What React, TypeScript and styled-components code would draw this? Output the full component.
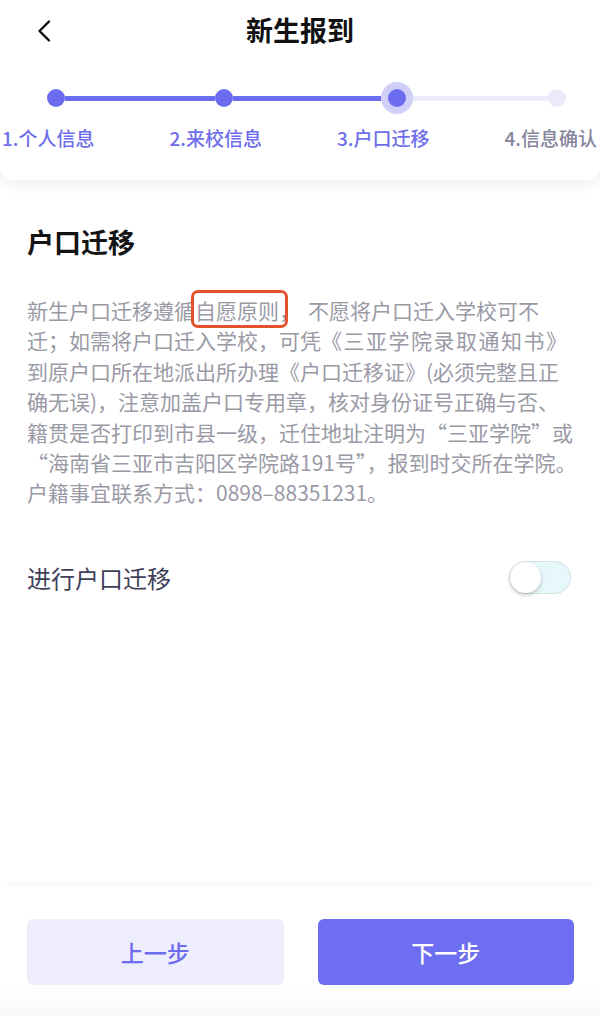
import React from "react";
import styled, { createGlobalStyle } from "styled-components";

const GlobalStyle = createGlobalStyle`
  html, body {
    margin: 0;
    padding: 0;
    background: #fff;
  }
  body {
    font-family: "Noto Sans CJK SC", "Noto Sans", sans-serif;
  }
`;

type Step = { label: string; done: boolean };

const steps: Step[] = [
  { label: "1.个人信息", done: true },
  { label: "2.来校信息", done: true },
  { label: "3.户口迁移", done: true },
  { label: "4.信息确认", done: false },
];

const BackIcon = () => (
  <svg width="16" height="24" viewBox="0 0 16 24" fill="none">
    <path d="M13 2.5L3.5 12L13 21.5" stroke="#111" strokeWidth="2.4" strokeLinecap="round" strokeLinejoin="round" />
  </svg>
);

export default function App() {
  return (
    <>
      <GlobalStyle />
      <SPage>
        <SHeader>
          <STopBar>
            <SBack>
              <BackIcon />
            </SBack>
            <STitle>新生报到</STitle>
            <span />
          </STopBar>
          <STrack>
            <SDot />
            <SSeg grow={150} active />
            <SDot />
            <SSeg grow={148} active />
            <SHalo>
              <SDot />
            </SHalo>
            <SSeg grow={135} />
            <SDot muted />
          </STrack>
          <SLabels>
            {steps.map((s) => (
              <SLabel key={s.label} done={s.done}>
                {s.label}
              </SLabel>
            ))}
          </SLabels>
        </SHeader>

        <SContent>
          <SH>户口迁移</SH>
          <SP>
            新生户口迁移遵循<SMark>自愿原则</SMark>，<SGap />不愿将户口迁入学校可不
            <br />
            迁；如需将户口迁入学校，可凭<SWide>《三亚学院录取通知书》</SWide>
            <br />
            到原户口所在地派出所办理《户口迁移证》(必须完整且正
            <br />
            确无误)，注意加盖户口专用章，核对身份证号正确与否、
            <br />
            籍贯是否打印到市县一级，迁住地址注明为“三亚学院”或
            <br />
            “海南省三亚市吉阳区学院路191号”，报到时交所在学院。
            <br />
            户籍事宜联系方式：0898–88351231。
          </SP>
          <SRow>
            <SRowLabel>进行户口迁移</SRowLabel>
            <SSwitch>
              <SKnob />
            </SSwitch>
          </SRow>
        </SContent>

        <SFooter>
          <SButton>上一步</SButton>
          <SButton primary>下一步</SButton>
        </SFooter>
      </SPage>
    </>
  );
}

const SPage = styled.div`
  height: 1016px;
  display: flex;
  flex-direction: column;
  overflow: hidden;
`;

const SHeader = styled.header`
  background: #fff;
  border-radius: 0 0 14px 14px;
  box-shadow: 0 6px 14px rgba(0, 0, 0, 0.06);
  padding-bottom: 29px;
  position: relative;
  z-index: 1;
`;

const STopBar = styled.div`
  height: 62px;
  display: grid;
  grid-template-columns: 80px 1fr 80px;
  align-items: center;
`;

const SBack = styled.div`
  display: flex;
  align-items: center;
  padding: 0 0 0 36px;
`;

const STitle = styled.h1`
  margin: 0 0 4px 0;
  text-align: center;
  font-size: 27px;
  font-weight: 700;
  color: #111;
`;

const STrack = styled.div`
  margin-top: 20px;
  height: 32px;
  display: flex;
  align-items: center;
  padding: 0 34px 0 47px;
`;

const SDot = styled.div<{ muted?: boolean }>`
  width: 18px;
  height: 18px;
  border-radius: 50%;
  flex-shrink: 0;
  background: ${(p) => (p.muted ? "#ebeafb" : "#6c6cf0")};
`;

const SHalo = styled.div`
  width: 32px;
  height: 32px;
  border-radius: 50%;
  flex-shrink: 0;
  background: #cfcff8;
  display: flex;
  align-items: center;
  justify-content: center;
`;

const SSeg = styled.div<{ grow: number; active?: boolean }>`
  flex: ${(p) => p.grow} 1 0;
  height: 5px;
  background: ${(p) => (p.active ? "#6c6cf0" : "#ebeafb")};
`;

const SLabels = styled.div`
  margin-top: 11px;
  display: flex;
  justify-content: space-between;
  padding: 0 3px 0 2px;
`;

const SLabel = styled.span<{ done: boolean }>`
  font-size: 19px;
  line-height: 26px;
  font-weight: 500;
  color: ${(p) => (p.done ? "#6e6eea" : "#85859c")};
`;

const SContent = styled.main`
  flex: 1;
  padding: 44px 27px 0 27px;
`;

const SH = styled.h2`
  margin: 0;
  font-size: 27px;
  line-height: 36px;
  font-weight: 700;
  color: #141414;
`;

const SP = styled.p`
  margin: 35px 0 0 0;
  font-size: 21px;
  line-height: 30.4px;
  color: #9a9aa6;
  white-space: nowrap;
`;

const SMark = styled.span`
  position: relative;

  &::after {
    content: "";
    position: absolute;
    top: -5px;
    bottom: -3px;
    left: -4px;
    right: -9px;
    border: 3px solid #e2532d;
    border-radius: 7px;
  }
`;

const SGap = styled.span`
  display: inline-block;
  width: 8px;
`;

const SWide = styled.span`
  letter-spacing: 1.5px;
`;

const SRow = styled.div`
  margin-top: 40px;
  height: 60px;
  display: flex;
  align-items: center;
  justify-content: space-between;
`;

const SRowLabel = styled.span`
  font-size: 24px;
  color: #40405a;
`;

const SSwitch = styled.div`
  width: 60px;
  height: 31px;
  margin-right: 2px;
  border-radius: 16px;
  background: #e7f8fa;
  border: 1px solid #d6e3e6;
  display: flex;
  align-items: center;
`;

const SKnob = styled.div`
  width: 31px;
  height: 31px;
  border-radius: 50%;
  background: #fff;
  box-shadow: 0 2px 4px rgba(0, 0, 0, 0.22);
`;

const SFooter = styled.footer`
  display: grid;
  grid-template-columns: 1fr 1fr;
  gap: 34px;
  padding: 32px 26px 31px 27px;
  background: linear-gradient(#fff 75%, #f9f9f9);
  box-shadow: 0 -3px 8px rgba(0, 0, 0, 0.035);
`;

const SButton = styled.button<{ primary?: boolean }>`
  height: 66px;
  border: none;
  border-radius: 6px;
  font-family: inherit;
  font-size: 23px;
  font-weight: 500;
  background: ${(p) => (p.primary ? "#6e6ef0" : "#eeedfc")};
  color: ${(p) => (p.primary ? "#fff" : "#6c6cf0")};
`;
